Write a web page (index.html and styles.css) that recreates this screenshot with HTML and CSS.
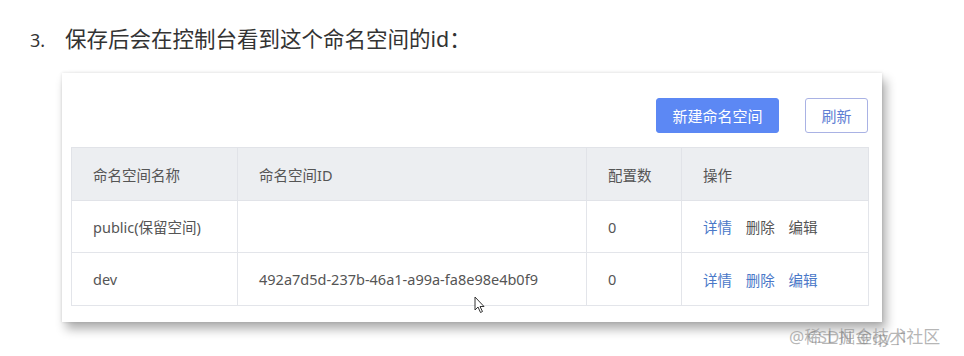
FILE: index.html
```html
<!DOCTYPE html>
<html lang="zh-CN">
<head>
  <meta charset="UTF-8" />
  <title>命名空间</title>
  <link rel="stylesheet" href="styles.css">
</head>
<body>

  <div class="step">
    <span class="step-num">3.</span>
    <span class="step-text">保存后会在控制台看到这个命名空间的id：</span>
  </div>

  <div class="card">
    <div class="toolbar">
      <button class="btn btn-primary">新建命名空间</button>
      <button class="btn btn-plain">刷新</button>
    </div>

    <table class="ns-table">
      <colgroup>
        <col class="c-name">
        <col class="c-id">
        <col class="c-count">
        <col class="c-ops">
      </colgroup>
      <thead>
        <tr>
          <th>命名空间名称</th>
          <th>命名空间ID</th>
          <th>配置数</th>
          <th>操作</th>
        </tr>
      </thead>
      <tbody>
        <tr>
          <td>public(保留空间)</td>
          <td></td>
          <td>0</td>
          <td class="ops">
            <a class="link">详情</a>
            <a class="link disabled">删除</a>
            <a class="link disabled">编辑</a>
          </td>
        </tr>
        <tr>
          <td>dev</td>
          <td>492a7d5d-237b-46a1-a99a-fa8e98e4b0f9</td>
          <td>0</td>
          <td class="ops">
            <a class="link">详情</a>
            <a class="link">删除</a>
            <a class="link">编辑</a>
          </td>
        </tr>
      </tbody>
    </table>
  </div>

  <svg class="cursor" width="12" height="18" viewBox="0 0 12 18">
    <path d="M1 1 L1 14 L4 11 L6.5 16.5 L8.5 15.5 L6 10.5 L10 10.5 Z" fill="#fff" stroke="#333" stroke-width="1"/>
  </svg>

  <div class="watermark">
    <span>@稀土掘金技术社区</span>
    <span class="wm-over">CSDN @qy_1</span>
  </div>

</body>
</html>
```

FILE: styles.css
```css
* {
  box-sizing: border-box;
  margin: 0;
  padding: 0;
}
body {
  background: #fff;
  color: #555;
  font-family: "Noto Sans", "Noto Sans CJK SC", sans-serif;
  position: relative;
  width: 964px;
  height: 356px;
  overflow: hidden;
}
.step {
  display: flex;
  align-items: baseline;
  padding: 22px 0 0 30px;
  height: 52px;
  color: #333;
}
.step-num {
  width: 35px;
  font-size: 18px;
}
.step-text {
  font-size: 21.5px;
}
.card {
  margin: 21px 0 0 62px;
  width: 820px;
  height: 249px;
  padding: 25px 14px 17px 9px;
  background: #fff;
  box-shadow: 4px 7px 10px rgba(0, 0, 0, 0.32), 0 0 3px rgba(0, 0, 0, 0.12);
}
.toolbar {
  display: flex;
  justify-content: flex-end;
  gap: 26px;
  margin-bottom: 14px;
}
.btn {
  height: 35px;
  font-family: inherit;
  font-size: 15px;
  border-radius: 3px;
  cursor: pointer;
}
.btn-primary {
  width: 123px;
  background: #5c88f4;
  border: 1px solid #5c88f4;
  color: #fff;
}
.btn-plain {
  width: 63px;
  background: #fff;
  border: 1px solid #a9b2e4;
  color: #5f80d4;
}
.ns-table {
  width: 797px;
  border-collapse: collapse;
  table-layout: fixed;
  font-size: 14.5px;
}
.c-name { width: 166px; }
.c-id { width: 349px; }
.c-count { width: 95px; }
.c-ops { width: 187px; }
.ns-table th,
.ns-table td {
  text-align: left;
  font-weight: normal;
  padding: 0 0 0 21px;
  border: 1px solid #e3e5ea;
  color: #555;
  white-space: nowrap;
}
.ns-table th {
  height: 53px;
  background: #eceef1;
  border-color: #e1e3e8;
}
.ns-table td {
  height: 52px;
}
.ns-table tbody tr:last-child td {
  height: 53px;
}
.ops .link {
  color: #4a78c8;
  margin-right: 10px;
}
.ops .link.disabled {
  color: #555;
}
.cursor {
  position: absolute;
  left: 474px;
  top: 296px;
}
.watermark {
  position: absolute;
  left: 789px;
  top: 323px;
  font-size: 17px;
  color: rgba(150, 150, 150, 0.7);
}
.watermark .wm-over {
  position: absolute;
  left: 18px;
  top: 2px;
  color: rgba(120, 120, 120, 0.5);
  white-space: nowrap;
}
```
